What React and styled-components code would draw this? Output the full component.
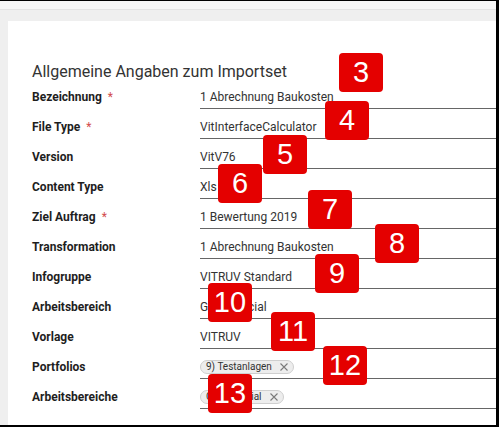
import styled, { createGlobalStyle } from "styled-components";

const GlobalStyle = createGlobalStyle`
  html, body {
    margin: 0;
    padding: 0;
    background: #efefef;
  }

  * {
    box-sizing: border-box;
  }
`;

const Frame = styled.div`
  position: relative;
  width: 499px;
  height: 427px;
  display: flex;
  flex-direction: column;
  overflow: hidden;
  background: #efefef;
  border-top: 1px solid #000;
  border-right: 3px solid #000;
  border-bottom: 2px solid #000;
  font-family: Roboto, "Liberation Sans", sans-serif;
`;

const TopStrip = styled.div`
  height: 9px;
  background: #f6f6f6;
  border-bottom: 1px solid #e3e3e3;
`;

const Card = styled.div`
  flex: 1;
  margin: 11px 0 0 8px;
  padding: 45px 0 0 24px;
  background: #fff;
`;

const Title = styled.h2`
  margin: 0 0 1px;
  font-size: 16px;
  font-weight: 400;
  line-height: 12px;
  color: #333;
`;

const Row = styled.div`
  display: grid;
  grid-template-columns: 168px 1fr;
  height: 30px;
`;

const Label = styled.div`
  padding-top: 10px;
  font-size: 12px;
  font-weight: 700;
  line-height: 16px;
  color: #1e1e1e;
  white-space: nowrap;
`;

const Required = styled.span`
  margin-left: 6px;
  font-weight: 400;
  color: #d24b4b;
`;

const Field = styled.div`
  display: flex;
  align-items: flex-start;
  padding-top: ${(p) => (p.$chips ? "11px" : "10px")};
  border-bottom: 1px solid #666;
  font-size: 12px;
  line-height: 16px;
  color: #333;
  white-space: nowrap;
`;

const Chip = styled.span`
  display: inline-flex;
  align-items: center;
  gap: 8px;
  height: 14px;
  padding: 0 5px;
  border: 1px solid #cfcfcf;
  border-radius: 7px;
  background: #ededed;
  font-size: 10px;
  line-height: 12px;
  color: #333;
`;

const Badge = styled.div`
  position: absolute;
  left: ${(p) => p.$x}px;
  top: ${(p) => p.$y}px;
  width: 44px;
  height: 39px;
  display: flex;
  align-items: center;
  justify-content: center;
  border-radius: 4px;
  background: #e40000;
  color: #fff;
  font-family: "Liberation Sans", Arial, sans-serif;
  font-size: 29px;
  line-height: 1;
`;

const CloseIcon = () => (
  <svg width="8" height="8" viewBox="0 0 8 8">
    <path d="M0.5 0.5 L7.5 7.5 M7.5 0.5 L0.5 7.5" stroke="#7a7a7a" strokeWidth="1.1" fill="none" />
  </svg>
);

const fields = [
  { label: "Bezeichnung", required: true, value: "1 Abrechnung Baukosten" },
  { label: "File Type", required: true, value: "VitInterfaceCalculator" },
  { label: "Version", value: "VitV76" },
  { label: "Content Type", value: "Xls" },
  { label: "Ziel Auftrag", required: true, value: "1 Bewertung 2019" },
  { label: "Transformation", value: "1 Abrechnung Baukosten" },
  { label: "Infogruppe", value: "VITRUV Standard" },
  { label: "Arbeitsbereich", value: "GB Financial" },
  { label: "Vorlage", value: "VITRUV" },
  { label: "Portfolios", chips: ["9) Testanlagen"] },
  { label: "Arbeitsbereiche", chips: ["GB Financial"] },
];

const badges = [
  { n: 3, x: 339, y: 53 },
  { n: 4, x: 325, y: 101 },
  { n: 5, x: 263, y: 135 },
  { n: 6, x: 218, y: 164 },
  { n: 7, x: 308, y: 190 },
  { n: 8, x: 375, y: 224 },
  { n: 9, x: 315, y: 254 },
  { n: 10, x: 208, y: 283 },
  { n: 11, x: 271, y: 312 },
  { n: 12, x: 323, y: 346 },
  { n: 13, x: 208, y: 374 },
];

export default function App() {
  return (
    <>
      <GlobalStyle />
      <Frame>
        <TopStrip />
        <Card>
          <Title>Allgemeine Angaben zum Importset</Title>
          {fields.map((f) => (
            <Row key={f.label}>
              <Label>
                {f.label}
                {f.required && <Required>*</Required>}
              </Label>
              <Field $chips={!!f.chips}>
                {f.chips
                  ? f.chips.map((c) => (
                      <Chip key={c}>
                        {c}
                        <CloseIcon />
                      </Chip>
                    ))
                  : f.value}
              </Field>
            </Row>
          ))}
        </Card>
        {badges.map((b) => (
          <Badge key={b.n} $x={b.x} $y={b.y - 1}>
            {b.n}
          </Badge>
        ))}
      </Frame>
    </>
  );
}
